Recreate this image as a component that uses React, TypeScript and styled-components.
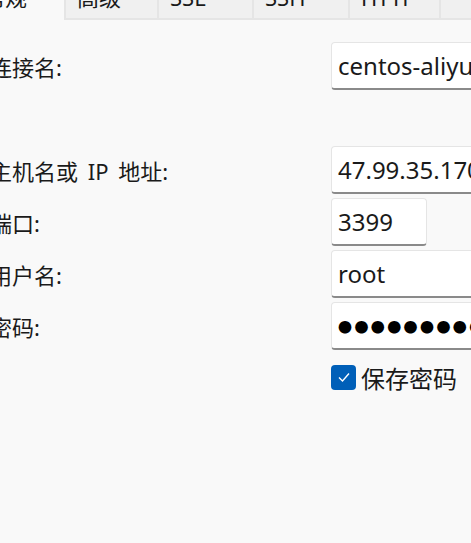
import React from 'react';
import styled, { createGlobalStyle } from 'styled-components';

const GlobalStyle = createGlobalStyle`
  html, body {
    margin: 0;
    padding: 0;
    height: 100%;
    background: #f9f9f9;
    overflow: hidden;
  }
  #root {
    height: 100%;
  }
`;

const Page = styled.div`
  height: 100%;
  overflow: hidden;
  background: #f9f9f9;
  font-family: "Noto Sans", "Noto Sans CJK SC", sans-serif;
  color: #1a1a1a;
`;

const Dialog = styled.div`
  margin: -20px 0 0 -30px;
  width: 700px;
`;

const TabBar = styled.div`
  display: flex;
  height: 40px;
`;

const Tab = styled.div<{ $active?: boolean; $width: number }>`
  box-sizing: border-box;
  width: ${p => p.$width}px;
  height: 40px;
  padding: 3px 0 0 11px;
  font-size: 22px;
  line-height: 28px;
  background: ${p => (p.$active ? '#f9f9f9' : '#f0f0f0')};
  border-bottom: 2px solid ${p => (p.$active ? 'transparent' : '#e5e5e5')};
  border-left: 2px solid ${p => (p.$active ? 'transparent' : '#e5e5e5')};
`;

const Form = styled.div`
  display: grid;
  grid-template-columns: 341px 320px;
  grid-auto-rows: 48px;
  row-gap: 4px;
  padding: 22px 0 0 20px;
`;

const Label = styled.div`
  display: flex;
  align-items: center;
  font-size: 22px;
  word-spacing: 4px;
  white-space: nowrap;
`;

const Field = styled.div<{ $width?: number }>`
  box-sizing: border-box;
  width: ${p => (p.$width ? `${p.$width}px` : '100%')};
  height: 48px;
  display: flex;
  align-items: center;
  padding: 0 6px;
  background: #ffffff;
  border: 1px solid #e5e5e5;
  border-bottom: 2px solid #8a8a8a;
  border-radius: 4px;
  font-size: 24px;
  white-space: nowrap;
  overflow: hidden;
`;

const Dots = styled.span`
  font-size: 14px;
  letter-spacing: 2.4px;
  color: #000;
`;

const Spacer = styled.div`
  grid-column: 1 / span 2;
`;

const CheckRow = styled.div`
  grid-column: 2;
  display: flex;
  align-items: center;
  gap: 5px;
  margin-top: 9px;
  height: 28px;
`;

const CheckBox = styled.div`
  width: 25px;
  height: 25px;
  border-radius: 4px;
  background: #005fb8;
  display: flex;
  align-items: center;
  justify-content: center;
`;

const CheckText = styled.span`
  font-size: 24px;
`;

const tabs = [
  { label: '常规', width: 94, active: true },
  { label: '高级', width: 93 },
  { label: 'SSL', width: 95 },
  { label: 'SSH', width: 96 },
  { label: 'HTTP', width: 91 },
  { label: '', width: 120 },
];

const App: React.FC = () => {
  return (
    <Page>
      <GlobalStyle />
      <Dialog>
        <TabBar>
          {tabs.map((t, i) => (
            <Tab key={i} $active={t.active} $width={t.width}>{t.label}</Tab>
          ))}
        </TabBar>
        <Form>
          <Label>连接名:</Label>
          <Field>centos-aliyun</Field>
          <Spacer />
          <Label>主机名或 IP 地址:</Label>
          <Field>47.99.35.170</Field>
          <Label>端口:</Label>
          <Field $width={96}>3399</Field>
          <Label>用户名:</Label>
          <Field>root</Field>
          <Label>密码:</Label>
          <Field><Dots>●●●●●●●●●●●●●●</Dots></Field>
          <CheckRow>
            <CheckBox>
              <svg width="16" height="16" viewBox="0 0 16 16">
                <polyline points="3,8.5 6.5,12 13,4.5" fill="none" stroke="#ffffff" strokeWidth="1.4" />
              </svg>
            </CheckBox>
            <CheckText>保存密码</CheckText>
          </CheckRow>
        </Form>
      </Dialog>
    </Page>
  );
};

export default App;
